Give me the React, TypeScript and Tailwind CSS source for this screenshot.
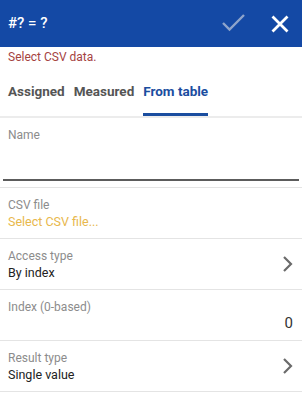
import React from "react";

const font = { fontFamily: "Roboto, 'Noto Sans', sans-serif" };

function Chevron() {
  return (
    <svg width="12" height="18" viewBox="0 0 12 18" className="shrink-0">
      <polyline points="3,2 10,9 3,16" fill="none" stroke="#6b6b6b" strokeWidth="2.2" />
    </svg>
  );
}

function Row({
  label,
  value,
  valueClass = "text-[#222222]",
  chevron = false,
  right,
}: {
  label: string;
  value?: string;
  valueClass?: string;
  chevron?: boolean;
  right?: string;
}) {
  return (
    <div className="flex h-[51px] items-center border-b border-[#e4e4e4] pl-[8px] pr-[9px]">
      <div className="flex flex-1 flex-col">
        <span className="text-[12px] leading-[16px] text-[#8c8c8c]">{label}</span>
        {value !== undefined && (
          <span className={`text-[12.5px] leading-[17px] ${valueClass}`}>{value}</span>
        )}
        {right !== undefined && (
          <span className="text-right text-[15px] leading-[17px] text-[#333333]">{right}</span>
        )}
      </div>
      {chevron && <Chevron />}
    </div>
  );
}

export default function App() {
  return (
    <div className="flex h-[412px] w-[302px] flex-col overflow-hidden bg-white" style={font}>
      <header className="flex h-[47px] shrink-0 items-center bg-[#1449a5] pl-[8px] pr-[13px]">
        <span className="flex-1 text-[15px] font-medium text-white">#? = ?</span>
        <svg width="24" height="20" viewBox="0 0 24 20" className="mr-[25px]">
          <polyline points="1,9 7.5,15.5 22,1" fill="none" stroke="#8ea4cb" strokeWidth="2.4" />
        </svg>
        <svg width="18" height="18" viewBox="0 0 18 18">
          <path d="M1.5 1.5 L16.5 16.5 M16.5 1.5 L1.5 16.5" stroke="#ffffff" strokeWidth="2.8" />
        </svg>
      </header>

      <div className="h-[21px] shrink-0 pl-[8px] pt-[2px] text-[12px] leading-[16px] text-[#a5433f]">
        Select CSV data.
      </div>

      <div className="flex h-[48px] shrink-0 gap-[9px] pl-[8px]">
        <div className="flex flex-col justify-end">
          <span className="pb-[13px] text-[13.5px] font-bold leading-[18px] text-[#555555]">Assigned</span>
          <div className="h-[3px]" />
        </div>
        <div className="flex flex-col justify-end">
          <span className="pb-[13px] text-[13.5px] font-bold leading-[18px] text-[#555555]">Measured</span>
          <div className="h-[3px]" />
        </div>
        <div className="flex flex-col justify-end">
          <span className="pb-[13px] text-[13.5px] font-bold leading-[18px] text-[#1a4d9f]">From table</span>
          <div className="h-[3px] bg-[#1a4d9f]" />
        </div>
      </div>
      <div className="h-[2px] shrink-0 bg-[#ececec]" />

      <div className="flex h-[70px] shrink-0 flex-col border-b border-[#e4e4e4]">
        <span className="pl-[8px] pt-[9px] text-[12px] leading-[16px] text-[#8c8c8c]">Name</span>
        <div className="flex-1" />
        <div className="mx-[3px] mb-[6px] h-[2px] bg-[#5c5c5c]" />
      </div>

      <Row label="CSV file" value="Select CSV file..." valueClass="text-[#e8b84c]" />
      <Row label="Access type" value="By index" chevron />
      <Row label="Index (0-based)" right="0" />
      <Row label="Result type" value="Single value" chevron />
    </div>
  );
}
